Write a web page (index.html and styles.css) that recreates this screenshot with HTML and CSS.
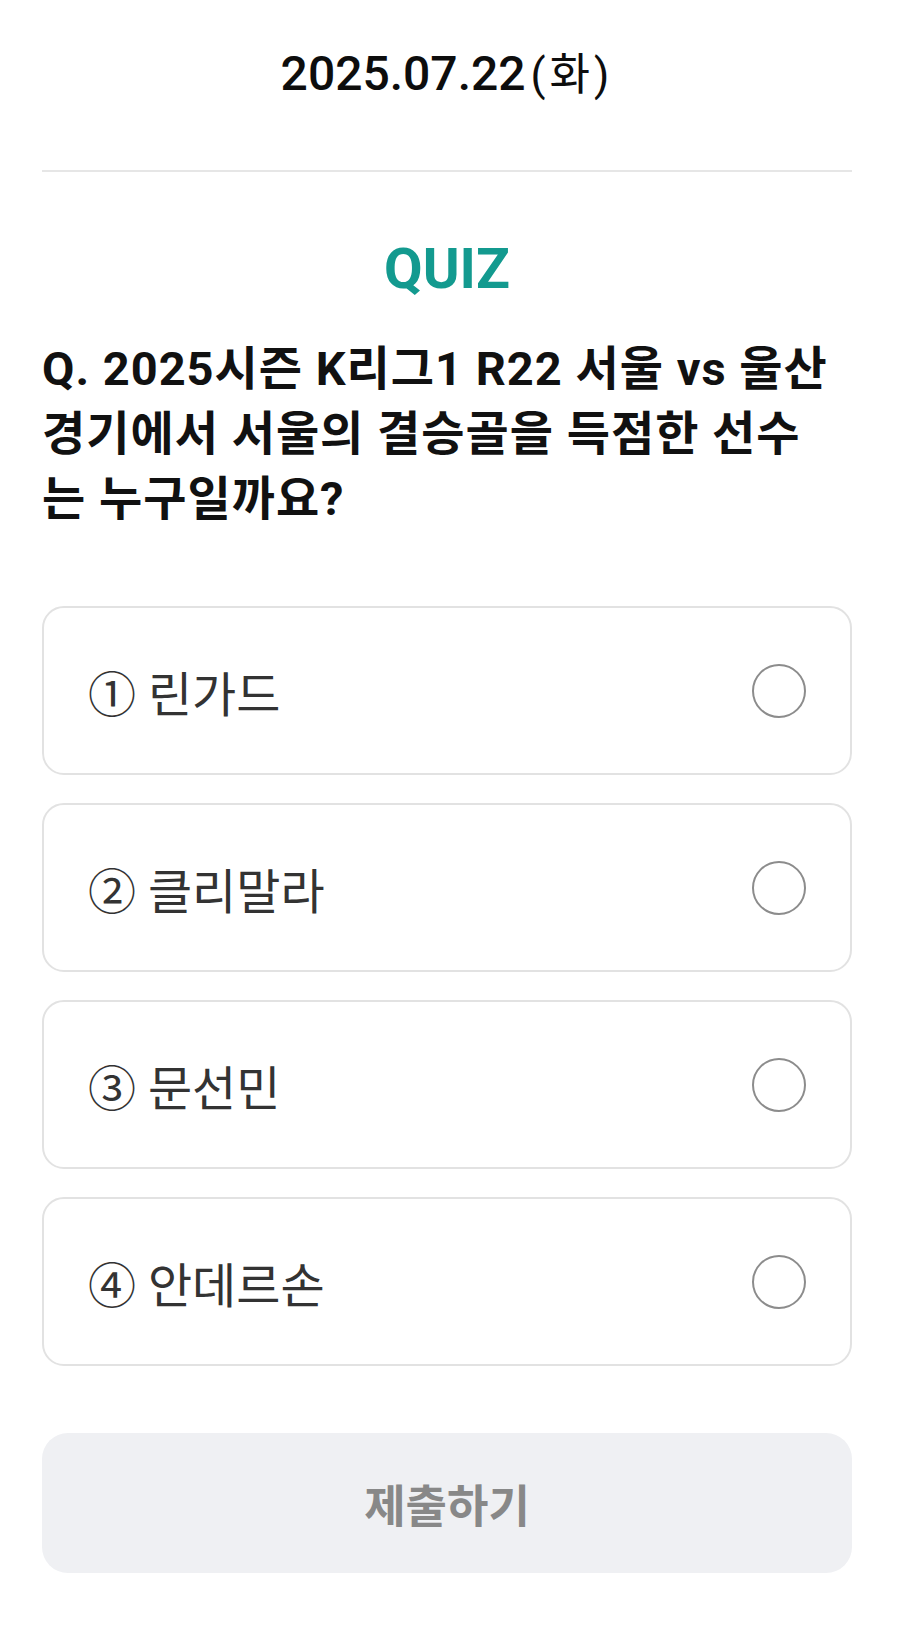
FILE: index.html
```html
<!DOCTYPE html>
<html lang="ko">
<head>
<meta charset="utf-8">
<title>QUIZ</title>
<link rel="stylesheet" href="styles.css">
</head>
<body>
<main class="page">
  <header class="date"><span class="date-num">2025.07.22</span><span class="date-day">(화)</span></header>
  <hr class="divider">
  <h1 class="quiz-label">QUIZ</h1>
  <p class="question">Q. 2025시즌 K리그1 R22 서울 vs 울산<br>경기에서 서울의 결승골을 득점한 선수<br>는 누구일까요?</p>
  <ul class="options">
    <li class="option"><span class="option-text">① 린가드</span><span class="radio"></span></li>
    <li class="option"><span class="option-text">② 클리말라</span><span class="radio"></span></li>
    <li class="option"><span class="option-text">③ 문선민</span><span class="radio"></span></li>
    <li class="option"><span class="option-text">④ 안데르손</span><span class="radio"></span></li>
  </ul>
  <button class="submit" type="button">제출하기</button>
</main>
</body>
</html>
```

FILE: styles.css
```css
* { box-sizing: border-box; }
html, body { margin: 0; padding: 0; background: #ffffff; }
body {
  font-family: Roboto, "Noto Sans CJK KR", sans-serif;
  color: #111111;
}
.page {
  width: 810px;
  margin-left: 42px;
  padding-top: 44px;
  padding-bottom: 40px;
}
.date {
  text-align: center;
  line-height: 60px;
  height: 62px;
  color: #0d0d0d;
}
.date-num {
  font-size: 48px;
  font-weight: 500;
}
.date-day {
  font-size: 44px;
  font-weight: 400;
  margin-left: 5px;
  letter-spacing: 4px;
}
.divider {
  border: 0;
  height: 2px;
  background: #e6e6e6;
  margin: 64px 0 0;
}
.quiz-label {
  margin: 64px 0 0;
  text-align: center;
  font-size: 56px;
  line-height: 67px;
  font-weight: 700;
  color: #139a8f;
}
.question {
  margin: 33px 0 0;
  font-size: 47px;
  line-height: 65px;
  font-weight: 700;
  letter-spacing: 1px;
  color: #111111;
  white-space: nowrap;
}
.options {
  list-style: none;
  margin: 75px 0 0;
  padding: 0;
  display: flex;
  flex-direction: column;
  gap: 28px;
}
.option {
  height: 169px;
  border: 2px solid #e2e2e2;
  border-radius: 22px;
  padding: 0 44px 0 44px;
  display: flex;
  align-items: center;
  justify-content: space-between;
}
.option-text {
  font-size: 48px;
  color: #333333;
  font-weight: 400;
}
.radio {
  width: 54px;
  height: 54px;
  border: 2px solid #8c8c8c;
  border-radius: 50%;
  flex: none;
}
.submit {
  display: block;
  width: 100%;
  height: 140px;
  margin-top: 67px;
  border: 0;
  border-radius: 26px;
  background: #eff0f3;
  color: #888888;
  font-family: Roboto, "Noto Sans CJK KR", sans-serif;
  font-size: 45px;
  font-weight: 700;
}
```
